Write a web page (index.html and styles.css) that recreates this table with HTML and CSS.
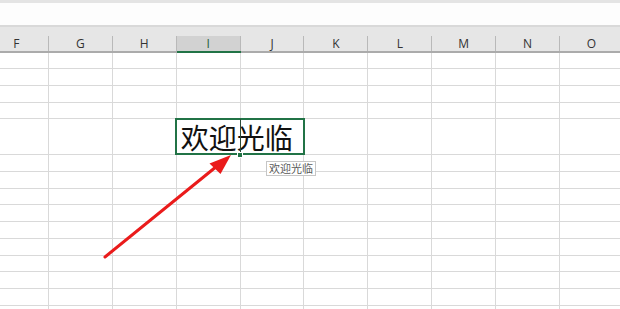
FILE: index.html
```html
<!DOCTYPE html>
<html lang="zh">
<head>
<meta charset="utf-8">
<title>Sheet</title>
<link rel="stylesheet" href="styles.css">
</head>
<body>
<div class="app">
  <div class="topbar"></div>
  <div class="formula"></div>
  <div class="sep"></div>
  <div class="colheader">
    <div class="hc"><span>F</span></div>
    <div class="hc"><span>G</span></div>
    <div class="hc"><span>H</span></div>
    <div class="hc active"><span>I</span></div>
    <div class="hc"><span>J</span></div>
    <div class="hc"><span>K</span></div>
    <div class="hc"><span>L</span></div>
    <div class="hc"><span>M</span></div>
    <div class="hc"><span>N</span></div>
    <div class="hc"><span>O</span></div>
  </div>
  <div class="grid">
    <div class="row first"><div class="c"></div><div class="c"></div><div class="c"></div><div class="c"></div><div class="c"></div><div class="c"></div><div class="c"></div><div class="c"></div><div class="c"></div><div class="c"></div></div>
    <div class="row"><div class="c"></div><div class="c"></div><div class="c"></div><div class="c"></div><div class="c"></div><div class="c"></div><div class="c"></div><div class="c"></div><div class="c"></div><div class="c"></div></div>
    <div class="row"><div class="c"></div><div class="c"></div><div class="c"></div><div class="c"></div><div class="c"></div><div class="c"></div><div class="c"></div><div class="c"></div><div class="c"></div><div class="c"></div></div>
    <div class="row"><div class="c"></div><div class="c"></div><div class="c"></div><div class="c"></div><div class="c"></div><div class="c"></div><div class="c"></div><div class="c"></div><div class="c"></div><div class="c"></div></div>
    <div class="row tall"><div class="c"></div><div class="c"></div><div class="c"></div><div class="c text">欢迎光临</div><div class="c"></div><div class="c"></div><div class="c"></div><div class="c"></div><div class="c"></div><div class="c"></div></div>
    <div class="row"><div class="c"></div><div class="c"></div><div class="c"></div><div class="c"></div><div class="c"></div><div class="c"></div><div class="c"></div><div class="c"></div><div class="c"></div><div class="c"></div></div>
    <div class="row"><div class="c"></div><div class="c"></div><div class="c"></div><div class="c"></div><div class="c"></div><div class="c"></div><div class="c"></div><div class="c"></div><div class="c"></div><div class="c"></div></div>
    <div class="row"><div class="c"></div><div class="c"></div><div class="c"></div><div class="c"></div><div class="c"></div><div class="c"></div><div class="c"></div><div class="c"></div><div class="c"></div><div class="c"></div></div>
    <div class="row"><div class="c"></div><div class="c"></div><div class="c"></div><div class="c"></div><div class="c"></div><div class="c"></div><div class="c"></div><div class="c"></div><div class="c"></div><div class="c"></div></div>
    <div class="row"><div class="c"></div><div class="c"></div><div class="c"></div><div class="c"></div><div class="c"></div><div class="c"></div><div class="c"></div><div class="c"></div><div class="c"></div><div class="c"></div></div>
    <div class="row"><div class="c"></div><div class="c"></div><div class="c"></div><div class="c"></div><div class="c"></div><div class="c"></div><div class="c"></div><div class="c"></div><div class="c"></div><div class="c"></div></div>
    <div class="row"><div class="c"></div><div class="c"></div><div class="c"></div><div class="c"></div><div class="c"></div><div class="c"></div><div class="c"></div><div class="c"></div><div class="c"></div><div class="c"></div></div>
    <div class="row"><div class="c"></div><div class="c"></div><div class="c"></div><div class="c"></div><div class="c"></div><div class="c"></div><div class="c"></div><div class="c"></div><div class="c"></div><div class="c"></div></div>
    <div class="row"><div class="c"></div><div class="c"></div><div class="c"></div><div class="c"></div><div class="c"></div><div class="c"></div><div class="c"></div><div class="c"></div><div class="c"></div><div class="c"></div></div>
    <div class="row"><div class="c"></div><div class="c"></div><div class="c"></div><div class="c"></div><div class="c"></div><div class="c"></div><div class="c"></div><div class="c"></div><div class="c"></div><div class="c"></div></div>
  </div>

  <div class="selection"></div>
  <div class="divider"></div>
  <div class="handle"></div>
  <div class="tooltip">欢迎光临</div>
  <svg class="arrow" width="620" height="309" viewBox="0 0 620 309">
    <line x1="105" y1="257" x2="222" y2="162" stroke="#ea1b1b" stroke-width="3" stroke-linecap="round"/>
    <polygon points="231,155 209.5,163.5 220.5,174" fill="#ea1b1b"/>
  </svg>
</div>
</body>
</html>
```
FILE: styles.css
```css
html, body {
  margin: 0;
  padding: 0;
  background: #ffffff;
}
.app {
  position: relative;
  width: 620px;
  height: 309px;
  overflow: hidden;
  font-family: "Open Sans", "Liberation Sans", sans-serif;
}
.topbar {
  height: 3px;
  background: #e4e4e4;
}
.formula {
  height: 22px;
  background: #fdfdfd;
}
.sep {
  height: 2px;
  background: #d9d9d9;
}
.colheader {
  display: flex;
  margin-left: -15px;
  height: 24px;
  background: #e6e6e6;
  border-bottom: 2px solid #ababab;
}
.hc {
  flex: 0 0 63.9px;
  min-width: 0;
  display: flex;
  flex-direction: column;
  justify-content: flex-end;
}
.hc span {
  display: block;
  height: 15px;
  line-height: 15px;
  text-align: center;
  font-size: 12px;
  color: #333333;
  border-right: 1px solid #b9b9b9;
  box-sizing: border-box;
}
.hc.active {
  margin-bottom: -2px;
  border-bottom: 2px solid #217346;
}
.hc.active span {
  background: #d2d2d2;
  color: #1f5b3b;
}
.grid {
  margin-left: -15px;
}
.row {
  display: flex;
  height: 16.75px;
  box-sizing: border-box;
  border-bottom: 1px solid #d9d9d9;
}
.row.first {
  height: 16px;
}
.row.tall {
  height: 35.75px;
}
.c {
  flex: 0 0 63.9px;
  min-width: 0;
  box-sizing: border-box;
  border-right: 1px solid #d9d9d9;
}
.c.text {
  position: relative;
  z-index: 1;
  white-space: nowrap;
  overflow: visible;
  padding-left: 4px;
  font-family: "Noto Sans CJK SC", sans-serif;
  font-size: 28px;
  line-height: 36px;
  color: #111111;
}
.selection {
  position: absolute;
  left: 175px;
  top: 118px;
  width: 130px;
  height: 37px;
  box-sizing: border-box;
  border: 2px solid #217346;
  z-index: 2;
}
.divider {
  position: absolute;
  left: 239.5px;
  top: 119px;
  width: 1px;
  height: 36px;
  background: #2b4a37;
  z-index: 2;
}
.handle {
  position: absolute;
  left: 236.5px;
  top: 152px;
  width: 4px;
  height: 4px;
  background: #217346;
  border: 1px solid #ffffff;
  z-index: 3;
}
.tooltip {
  position: absolute;
  left: 266px;
  top: 161px;
  height: 15px;
  padding: 0 2px;
  box-sizing: border-box;
  background: #ffffff;
  border: 1px solid #c6c6c6;
  font-family: "Noto Sans CJK SC", sans-serif;
  font-size: 11px;
  line-height: 13px;
  color: #5a5a5a;
  z-index: 3;
}
.arrow {
  position: absolute;
  left: 0;
  top: 0;
  z-index: 4;
  pointer-events: none;
}
```
